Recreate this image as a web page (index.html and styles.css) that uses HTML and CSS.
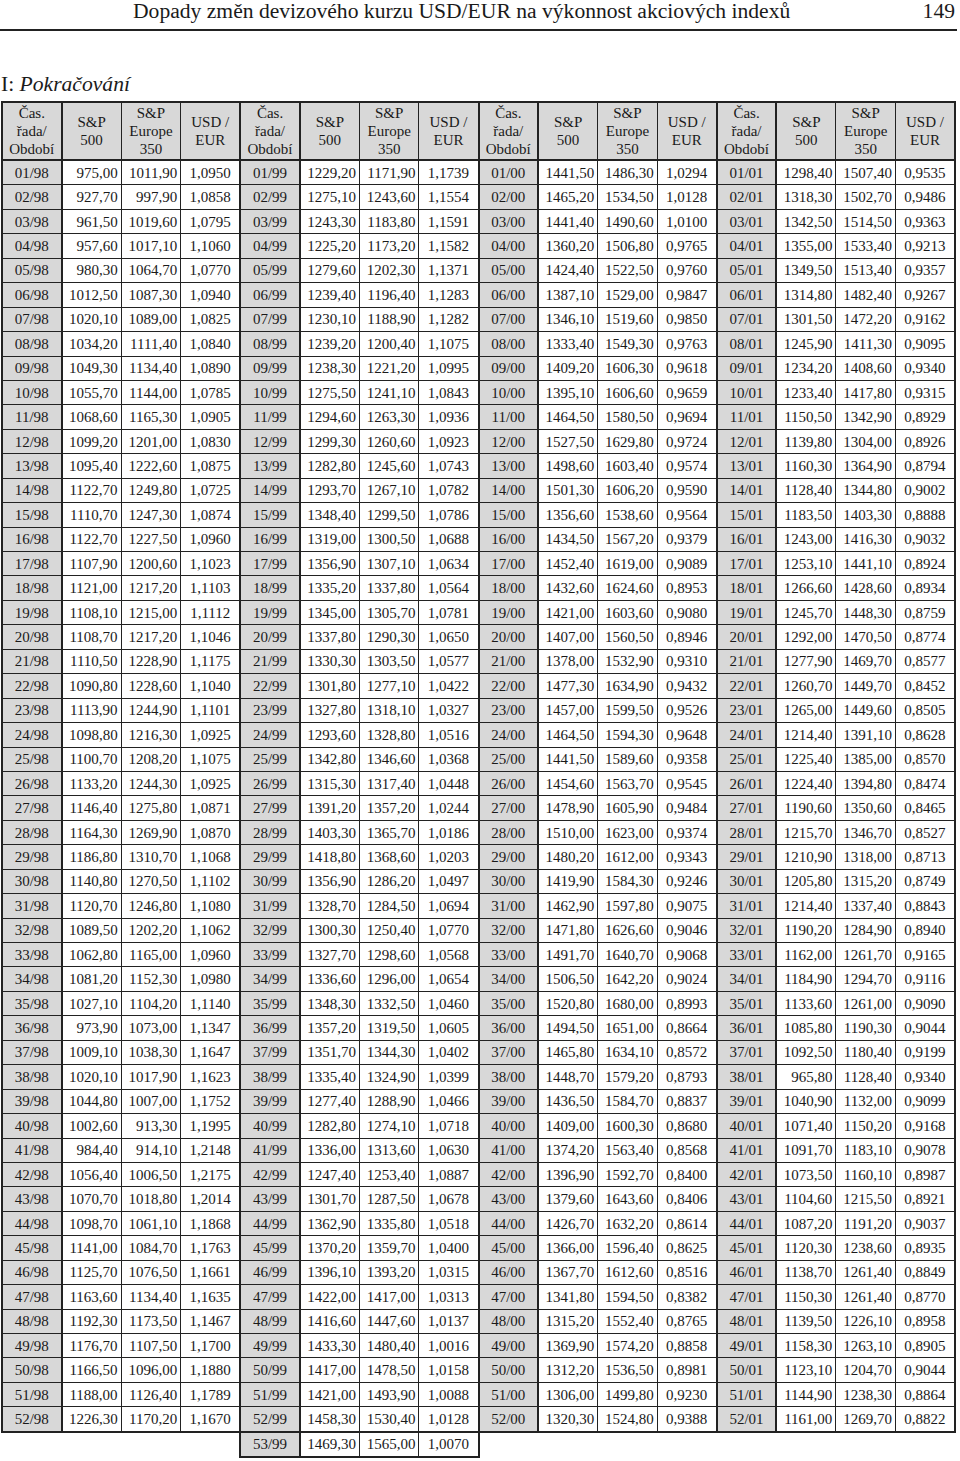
FILE: index.html
```html
<!DOCTYPE html>
<html lang="cs">
<head>
<meta charset="utf-8">
<title>Dopady změn devizového kurzu USD/EUR</title>
<link rel="stylesheet" href="styles.css">
</head>
<body>
<header class="page-head">
  <span class="title">Dopady změn devizového kurzu USD/EUR na výkonnost akciových indexů</span>
  <span class="pageno">149</span>
</header>
<div class="caption">I: <em>Pokračování</em></div>
<table class="data">
<thead>
<tr><th>Čas.<br>řada/<br>Období<th>S&amp;P<br>500<th>S&amp;P<br>Europe<br>350<th>USD /<br>EUR<th>Čas.<br>řada/<br>Období<th>S&amp;P<br>500<th>S&amp;P<br>Europe<br>350<th>USD /<br>EUR<th>Čas.<br>řada/<br>Období<th>S&amp;P<br>500<th>S&amp;P<br>Europe<br>350<th>USD /<br>EUR<th>Čas.<br>řada/<br>Období<th>S&amp;P<br>500<th>S&amp;P<br>Europe<br>350<th>USD /<br>EUR
</thead>
<tbody>
<tr><td>01/98<td>975,00<td>1011,90<td>1,0950<td>01/99<td>1229,20<td>1171,90<td>1,1739<td>01/00<td>1441,50<td>1486,30<td>1,0294<td>01/01<td>1298,40<td>1507,40<td>0,9535
<tr><td>02/98<td>927,70<td>997,90<td>1,0858<td>02/99<td>1275,10<td>1243,60<td>1,1554<td>02/00<td>1465,20<td>1534,50<td>1,0128<td>02/01<td>1318,30<td>1502,70<td>0,9486
<tr><td>03/98<td>961,50<td>1019,60<td>1,0795<td>03/99<td>1243,30<td>1183,80<td>1,1591<td>03/00<td>1441,40<td>1490,60<td>1,0100<td>03/01<td>1342,50<td>1514,50<td>0,9363
<tr><td>04/98<td>957,60<td>1017,10<td>1,1060<td>04/99<td>1225,20<td>1173,20<td>1,1582<td>04/00<td>1360,20<td>1506,80<td>0,9765<td>04/01<td>1355,00<td>1533,40<td>0,9213
<tr><td>05/98<td>980,30<td>1064,70<td>1,0770<td>05/99<td>1279,60<td>1202,30<td>1,1371<td>05/00<td>1424,40<td>1522,50<td>0,9760<td>05/01<td>1349,50<td>1513,40<td>0,9357
<tr><td>06/98<td>1012,50<td>1087,30<td>1,0940<td>06/99<td>1239,40<td>1196,40<td>1,1283<td>06/00<td>1387,10<td>1529,00<td>0,9847<td>06/01<td>1314,80<td>1482,40<td>0,9267
<tr><td>07/98<td>1020,10<td>1089,00<td>1,0825<td>07/99<td>1230,10<td>1188,90<td>1,1282<td>07/00<td>1346,10<td>1519,60<td>0,9850<td>07/01<td>1301,50<td>1472,20<td>0,9162
<tr><td>08/98<td>1034,20<td>1111,40<td>1,0840<td>08/99<td>1239,20<td>1200,40<td>1,1075<td>08/00<td>1333,40<td>1549,30<td>0,9763<td>08/01<td>1245,90<td>1411,30<td>0,9095
<tr><td>09/98<td>1049,30<td>1134,40<td>1,0890<td>09/99<td>1238,30<td>1221,20<td>1,0995<td>09/00<td>1409,20<td>1606,30<td>0,9618<td>09/01<td>1234,20<td>1408,60<td>0,9340
<tr><td>10/98<td>1055,70<td>1144,00<td>1,0785<td>10/99<td>1275,50<td>1241,10<td>1,0843<td>10/00<td>1395,10<td>1606,60<td>0,9659<td>10/01<td>1233,40<td>1417,80<td>0,9315
<tr><td>11/98<td>1068,60<td>1165,30<td>1,0905<td>11/99<td>1294,60<td>1263,30<td>1,0936<td>11/00<td>1464,50<td>1580,50<td>0,9694<td>11/01<td>1150,50<td>1342,90<td>0,8929
<tr><td>12/98<td>1099,20<td>1201,00<td>1,0830<td>12/99<td>1299,30<td>1260,60<td>1,0923<td>12/00<td>1527,50<td>1629,80<td>0,9724<td>12/01<td>1139,80<td>1304,00<td>0,8926
<tr><td>13/98<td>1095,40<td>1222,60<td>1,0875<td>13/99<td>1282,80<td>1245,60<td>1,0743<td>13/00<td>1498,60<td>1603,40<td>0,9574<td>13/01<td>1160,30<td>1364,90<td>0,8794
<tr><td>14/98<td>1122,70<td>1249,80<td>1,0725<td>14/99<td>1293,70<td>1267,10<td>1,0782<td>14/00<td>1501,30<td>1606,20<td>0,9590<td>14/01<td>1128,40<td>1344,80<td>0,9002
<tr><td>15/98<td>1110,70<td>1247,30<td>1,0874<td>15/99<td>1348,40<td>1299,50<td>1,0786<td>15/00<td>1356,60<td>1538,60<td>0,9564<td>15/01<td>1183,50<td>1403,30<td>0,8888
<tr><td>16/98<td>1122,70<td>1227,50<td>1,0960<td>16/99<td>1319,00<td>1300,50<td>1,0688<td>16/00<td>1434,50<td>1567,20<td>0,9379<td>16/01<td>1243,00<td>1416,30<td>0,9032
<tr><td>17/98<td>1107,90<td>1200,60<td>1,1023<td>17/99<td>1356,90<td>1307,10<td>1,0634<td>17/00<td>1452,40<td>1619,00<td>0,9089<td>17/01<td>1253,10<td>1441,10<td>0,8924
<tr><td>18/98<td>1121,00<td>1217,20<td>1,1103<td>18/99<td>1335,20<td>1337,80<td>1,0564<td>18/00<td>1432,60<td>1624,60<td>0,8953<td>18/01<td>1266,60<td>1428,60<td>0,8934
<tr><td>19/98<td>1108,10<td>1215,00<td>1,1112<td>19/99<td>1345,00<td>1305,70<td>1,0781<td>19/00<td>1421,00<td>1603,60<td>0,9080<td>19/01<td>1245,70<td>1448,30<td>0,8759
<tr><td>20/98<td>1108,70<td>1217,20<td>1,1046<td>20/99<td>1337,80<td>1290,30<td>1,0650<td>20/00<td>1407,00<td>1560,50<td>0,8946<td>20/01<td>1292,00<td>1470,50<td>0,8774
<tr><td>21/98<td>1110,50<td>1228,90<td>1,1175<td>21/99<td>1330,30<td>1303,50<td>1,0577<td>21/00<td>1378,00<td>1532,90<td>0,9310<td>21/01<td>1277,90<td>1469,70<td>0,8577
<tr><td>22/98<td>1090,80<td>1228,60<td>1,1040<td>22/99<td>1301,80<td>1277,10<td>1,0422<td>22/00<td>1477,30<td>1634,90<td>0,9432<td>22/01<td>1260,70<td>1449,70<td>0,8452
<tr><td>23/98<td>1113,90<td>1244,90<td>1,1101<td>23/99<td>1327,80<td>1318,10<td>1,0327<td>23/00<td>1457,00<td>1599,50<td>0,9526<td>23/01<td>1265,00<td>1449,60<td>0,8505
<tr><td>24/98<td>1098,80<td>1216,30<td>1,0925<td>24/99<td>1293,60<td>1328,80<td>1,0516<td>24/00<td>1464,50<td>1594,30<td>0,9648<td>24/01<td>1214,40<td>1391,10<td>0,8628
<tr><td>25/98<td>1100,70<td>1208,20<td>1,1075<td>25/99<td>1342,80<td>1346,60<td>1,0368<td>25/00<td>1441,50<td>1589,60<td>0,9358<td>25/01<td>1225,40<td>1385,00<td>0,8570
<tr><td>26/98<td>1133,20<td>1244,30<td>1,0925<td>26/99<td>1315,30<td>1317,40<td>1,0448<td>26/00<td>1454,60<td>1563,70<td>0,9545<td>26/01<td>1224,40<td>1394,80<td>0,8474
<tr><td>27/98<td>1146,40<td>1275,80<td>1,0871<td>27/99<td>1391,20<td>1357,20<td>1,0244<td>27/00<td>1478,90<td>1605,90<td>0,9484<td>27/01<td>1190,60<td>1350,60<td>0,8465
<tr><td>28/98<td>1164,30<td>1269,90<td>1,0870<td>28/99<td>1403,30<td>1365,70<td>1,0186<td>28/00<td>1510,00<td>1623,00<td>0,9374<td>28/01<td>1215,70<td>1346,70<td>0,8527
<tr><td>29/98<td>1186,80<td>1310,70<td>1,1068<td>29/99<td>1418,80<td>1368,60<td>1,0203<td>29/00<td>1480,20<td>1612,00<td>0,9343<td>29/01<td>1210,90<td>1318,00<td>0,8713
<tr><td>30/98<td>1140,80<td>1270,50<td>1,1102<td>30/99<td>1356,90<td>1286,20<td>1,0497<td>30/00<td>1419,90<td>1584,30<td>0,9246<td>30/01<td>1205,80<td>1315,20<td>0,8749
<tr><td>31/98<td>1120,70<td>1246,80<td>1,1080<td>31/99<td>1328,70<td>1284,50<td>1,0694<td>31/00<td>1462,90<td>1597,80<td>0,9075<td>31/01<td>1214,40<td>1337,40<td>0,8843
<tr><td>32/98<td>1089,50<td>1202,20<td>1,1062<td>32/99<td>1300,30<td>1250,40<td>1,0770<td>32/00<td>1471,80<td>1626,60<td>0,9046<td>32/01<td>1190,20<td>1284,90<td>0,8940
<tr><td>33/98<td>1062,80<td>1165,00<td>1,0960<td>33/99<td>1327,70<td>1298,60<td>1,0568<td>33/00<td>1491,70<td>1640,70<td>0,9068<td>33/01<td>1162,00<td>1261,70<td>0,9165
<tr><td>34/98<td>1081,20<td>1152,30<td>1,0980<td>34/99<td>1336,60<td>1296,00<td>1,0654<td>34/00<td>1506,50<td>1642,20<td>0,9024<td>34/01<td>1184,90<td>1294,70<td>0,9116
<tr><td>35/98<td>1027,10<td>1104,20<td>1,1140<td>35/99<td>1348,30<td>1332,50<td>1,0460<td>35/00<td>1520,80<td>1680,00<td>0,8993<td>35/01<td>1133,60<td>1261,00<td>0,9090
<tr><td>36/98<td>973,90<td>1073,00<td>1,1347<td>36/99<td>1357,20<td>1319,50<td>1,0605<td>36/00<td>1494,50<td>1651,00<td>0,8664<td>36/01<td>1085,80<td>1190,30<td>0,9044
<tr><td>37/98<td>1009,10<td>1038,30<td>1,1647<td>37/99<td>1351,70<td>1344,30<td>1,0402<td>37/00<td>1465,80<td>1634,10<td>0,8572<td>37/01<td>1092,50<td>1180,40<td>0,9199
<tr><td>38/98<td>1020,10<td>1017,90<td>1,1623<td>38/99<td>1335,40<td>1324,90<td>1,0399<td>38/00<td>1448,70<td>1579,20<td>0,8793<td>38/01<td>965,80<td>1128,40<td>0,9340
<tr><td>39/98<td>1044,80<td>1007,00<td>1,1752<td>39/99<td>1277,40<td>1288,90<td>1,0466<td>39/00<td>1436,50<td>1584,70<td>0,8837<td>39/01<td>1040,90<td>1132,00<td>0,9099
<tr><td>40/98<td>1002,60<td>913,30<td>1,1995<td>40/99<td>1282,80<td>1274,10<td>1,0718<td>40/00<td>1409,00<td>1600,30<td>0,8680<td>40/01<td>1071,40<td>1150,20<td>0,9168
<tr><td>41/98<td>984,40<td>914,10<td>1,2148<td>41/99<td>1336,00<td>1313,60<td>1,0630<td>41/00<td>1374,20<td>1563,40<td>0,8568<td>41/01<td>1091,70<td>1183,10<td>0,9078
<tr><td>42/98<td>1056,40<td>1006,50<td>1,2175<td>42/99<td>1247,40<td>1253,40<td>1,0887<td>42/00<td>1396,90<td>1592,70<td>0,8400<td>42/01<td>1073,50<td>1160,10<td>0,8987
<tr><td>43/98<td>1070,70<td>1018,80<td>1,2014<td>43/99<td>1301,70<td>1287,50<td>1,0678<td>43/00<td>1379,60<td>1643,60<td>0,8406<td>43/01<td>1104,60<td>1215,50<td>0,8921
<tr><td>44/98<td>1098,70<td>1061,10<td>1,1868<td>44/99<td>1362,90<td>1335,80<td>1,0518<td>44/00<td>1426,70<td>1632,20<td>0,8614<td>44/01<td>1087,20<td>1191,20<td>0,9037
<tr><td>45/98<td>1141,00<td>1084,70<td>1,1763<td>45/99<td>1370,20<td>1359,70<td>1,0400<td>45/00<td>1366,00<td>1596,40<td>0,8625<td>45/01<td>1120,30<td>1238,60<td>0,8935
<tr><td>46/98<td>1125,70<td>1076,50<td>1,1661<td>46/99<td>1396,10<td>1393,20<td>1,0315<td>46/00<td>1367,70<td>1612,60<td>0,8516<td>46/01<td>1138,70<td>1261,40<td>0,8849
<tr><td>47/98<td>1163,60<td>1134,40<td>1,1635<td>47/99<td>1422,00<td>1417,00<td>1,0313<td>47/00<td>1341,80<td>1594,50<td>0,8382<td>47/01<td>1150,30<td>1261,40<td>0,8770
<tr><td>48/98<td>1192,30<td>1173,50<td>1,1467<td>48/99<td>1416,60<td>1447,60<td>1,0137<td>48/00<td>1315,20<td>1552,40<td>0,8765<td>48/01<td>1139,50<td>1226,10<td>0,8958
<tr><td>49/98<td>1176,70<td>1107,50<td>1,1700<td>49/99<td>1433,30<td>1480,40<td>1,0016<td>49/00<td>1369,90<td>1574,20<td>0,8858<td>49/01<td>1158,30<td>1263,10<td>0,8905
<tr><td>50/98<td>1166,50<td>1096,00<td>1,1880<td>50/99<td>1417,00<td>1478,50<td>1,0158<td>50/00<td>1312,20<td>1536,50<td>0,8981<td>50/01<td>1123,10<td>1204,70<td>0,9044
<tr><td>51/98<td>1188,00<td>1126,40<td>1,1789<td>51/99<td>1421,00<td>1493,90<td>1,0088<td>51/00<td>1306,00<td>1499,80<td>0,9230<td>51/01<td>1144,90<td>1238,30<td>0,8864
<tr class="last"><td>52/98<td>1226,30<td>1170,20<td>1,1670<td>52/99<td>1458,30<td>1530,40<td>1,0128<td>52/00<td>1320,30<td>1524,80<td>0,9388<td>52/01<td>1161,00<td>1269,70<td>0,8822
<tr class="extra"><td class="none"><td class="none"><td class="none"><td class="none"><td>53/99<td>1469,30<td>1565,00<td>1,0070<td class="none"><td class="none"><td class="none"><td class="none"><td class="none"><td class="none"><td class="none"><td class="none">
</tbody>
</table>
</body>
</html>
```
FILE: styles.css
```css
html, body {
  margin: 0;
  padding: 0;
  background: #ffffff;
}

body {
  font-family: "Liberation Serif", "Times New Roman", serif;
  color: #1a1a1a;
}

.page-head {
  display: flex;
  justify-content: space-between;
  align-items: flex-start;
  width: 957px;
  height: 29px;
  border-bottom: 2px solid #222;
  font-size: 21.6px;
  line-height: 23px;
}

.title {
  margin-left: 133px;
}

.pageno {
  margin-right: 2px;
}

.caption {
  margin: 42px 0 5px 1px;
  font-size: 21.6px;
  line-height: 23px;
}

.caption em {
  font-style: italic;
}

.data {
  border-collapse: collapse;
  table-layout: fixed;
  width: 955px;
  margin-left: 1px;
  font-size: 15px;
}

.data th,
.data td {
  border: 1px solid #222;
  padding: 0;
  overflow: hidden;
  white-space: nowrap;
}

.data th {
  background: #d8d8d8;
  font-weight: normal;
  line-height: 18px;
  height: 56px;
  border-top: 2px solid #222;
  border-bottom: 2px solid #222;
  text-align: center;
  vertical-align: middle;
}

.data td {
  height: 23.45px;
  line-height: 18px;
  text-align: center;
}

.data th:nth-child(4n+1),
.data td:nth-child(4n+1) {
  border-left: 2px solid #222;
  border-right: 2px solid #222;
}

.data th:last-child,
.data td:last-child {
  border-right: 2px solid #222;
}

.data td:nth-child(4n+1) {
  background: #d8d8d8;
}

.data td:nth-child(4n+2),
.data td:nth-child(4n+3) {
  text-align: right;
  padding-right: 3px;
}

.data tr.last td {
  border-bottom: 2px solid #222;
}

.data tr.extra td {
  border-bottom: 2px solid #222;
}

.data tr.extra td:nth-child(8) {
  border-right: 2px solid #222;
}

.data tr.extra td.none {
  border: none;
  background: transparent;
}
```
